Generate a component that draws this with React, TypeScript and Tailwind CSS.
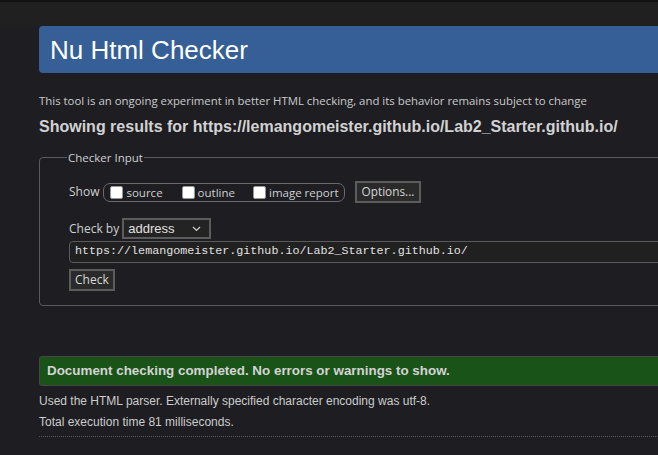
export default function App() {
  const ui = { fontFamily: '"Open Sans", "Noto Sans", sans-serif' };
  const arial = { fontFamily: '"Liberation Sans", Arial, sans-serif' };
  const mono = { fontFamily: '"Liberation Mono", "DejaVu Sans Mono", monospace' };

  return (
    <div className="w-[658px] h-[455px] overflow-hidden bg-[#1e1e22] text-[#cfcfcf]">
      <div className="h-[2px] bg-[#121212]" />
      <div className="h-[24px] bg-[#202020]" />
      <div className="pl-[39px] w-[760px]">
        <div className="h-[47px] bg-[#355f96] rounded-[4px] flex items-center pl-[11px]">
          <h1 className="text-[26px] text-white leading-none" style={arial}>Nu Html Checker</h1>
        </div>

        <p className="mt-[20px] text-[11.4px] leading-[16px] text-[#cacaca]" style={ui}>
          This tool is an ongoing experiment in better HTML checking, and its behavior remains subject to change
        </p>
        <h2 className="mt-[8px] text-[16px] font-bold leading-[20px] text-[#d2d2d2]" style={arial}>
          Showing results for https://lemangomeister.github.io/Lab2_Starter.github.io/
        </h2>

        <fieldset className="mt-[12px] h-[157px] border border-[#5a5a5a] rounded-[4px] pl-[29px] pr-0" style={ui}>
          <legend className="text-[11.5px] px-[1px] ml-[-2px] text-[#cfcfcf]">Checker Input</legend>
          <div className="flex items-center mt-[14px] h-[24px]">
            <span className="text-[12px] mr-[4px]">Show</span>
            <div className="flex items-center h-[19px] border border-[#6a6a6a] rounded-[7px] pl-[6px] pr-[5px] text-[11.5px]">
              <span className="w-[13px] h-[13px] bg-white rounded-[2px] border border-[#999]" />
              <span className="ml-[3px] mr-[19px]">source</span>
              <span className="w-[13px] h-[13px] bg-white rounded-[2px] border border-[#999]" />
              <span className="ml-[3px] mr-[18px]">outline</span>
              <span className="w-[13px] h-[13px] bg-white rounded-[2px] border border-[#999]" />
              <span className="ml-[3px]">image report</span>
            </div>
            <button className="ml-[10px] h-[22px] px-[5px] border-2 border-[#5c5c5c] bg-[#2a2a2a] text-[11.8px] text-[#d6d6d6]">
              Options...
            </button>
          </div>

          <div className="flex items-center mt-[14px] h-[21px]">
            <span className="text-[12px] mr-[3px]">Check by</span>
            <div className="w-[89px] h-[21px] border-2 border-[#5c5c5c] bg-[#232323] flex items-center justify-between pl-[4px] pr-[8px]">
              <span className="text-[13px] text-[#e0e0e0]" style={arial}>address</span>
              <svg width="9" height="6" viewBox="0 0 9 6" fill="none">
                <path d="M1 1l3.5 3.5L8 1" stroke="#cfcfcf" strokeWidth="1.2" />
              </svg>
            </div>
          </div>

          <div className="mt-[2px] h-[22px] border border-[#5a5a5a] rounded-[4px] bg-[#202020] flex items-center pl-[5px]">
            <span className="text-[11.7px] text-[#e0e0e0]" style={mono}>
              https://lemangomeister.github.io/Lab2_Starter.github.io/
            </span>
          </div>

          <button className="mt-[6px] h-[22px] px-[4px] border-2 border-[#5c5c5c] bg-[#2a2a2a] text-[12px] text-[#d6d6d6] flex items-center">
            Check
          </button>
        </fieldset>

        <div className="mt-[50px] h-[30px] bg-[#1a5317] border border-[#464646] rounded-l-[3px] flex items-center pl-[7px]">
          <span className="text-[13.4px] font-bold text-[#d4d4d4]" style={arial}>
            Document checking completed. No errors or warnings to show.
          </span>
        </div>
        <p className="mt-[7px] text-[12px] leading-[16px] text-[#cccccc]" style={arial}>
          Used the HTML parser. Externally specified character encoding was utf-8.
        </p>
        <p className="mt-[5px] text-[12px] leading-[16px] text-[#cccccc]" style={arial}>
          Total execution time 81 milliseconds.
        </p>
        <div className="mt-[6px] border-t border-dotted border-[#5a5a5a]" />
      </div>
    </div>
  );
}
